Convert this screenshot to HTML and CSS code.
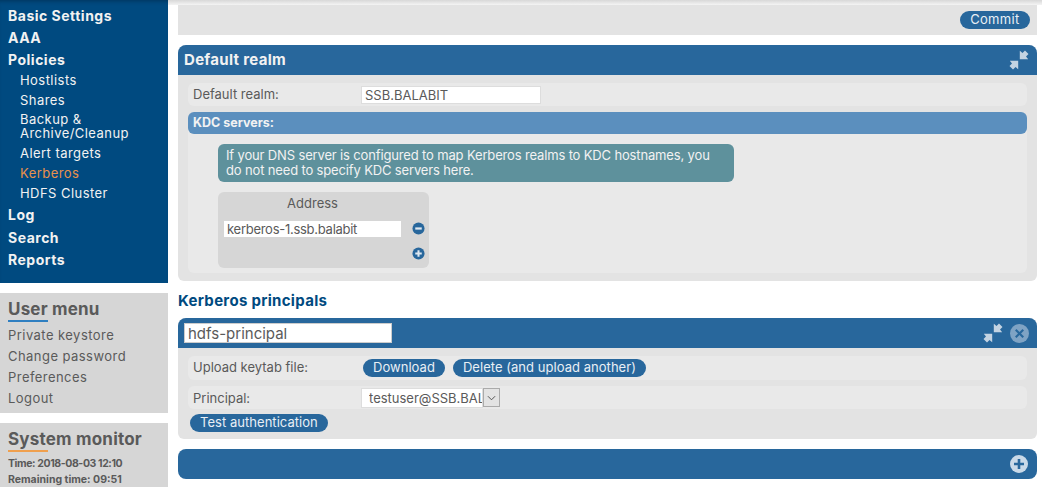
FILE: index.html
```html
<!DOCTYPE html>
<html lang="en">
<head>
<meta charset="utf-8">
<title>Kerberos</title>
<link rel="stylesheet" href="styles.css">
</head>
<body>
<div class="topshadow"></div>
<div class="page">
  <aside class="sidebar">
    <nav class="nav">
      <a class="l1">Basic Settings</a>
      <a class="l1">AAA</a>
      <a class="l1">Policies</a>
      <a class="l2">Hostlists</a>
      <a class="l2">Shares</a>
      <a class="l2 twoline">Backup &amp; Archive/Cleanup</a>
      <a class="l2">Alert targets</a>
      <a class="l2 active">Kerberos</a>
      <a class="l2">HDFS Cluster</a>
      <a class="l1">Log</a>
      <a class="l1 search">Search</a>
      <a class="l1">Reports</a>
    </nav>
    <section class="box usermenu">
      <h2 class="boxtitle blue">User menu</h2>
      <a>Private keystore</a>
      <a>Change password</a>
      <a>Preferences</a>
      <a>Logout</a>
    </section>
    <section class="box monitor">
      <h2 class="boxtitle orange">System monitor</h2>
      <p class="time">Time: 2018-08-03 12:10</p>
      <p>Remaining time: 09:51</p>
    </section>
  </aside>
  <main class="main">
    <div class="commitbar"><button class="btn commit">Commit</button></div>

    <section class="panel realm">
      <header class="phead">
        <span class="ptitle">Default realm</span>
        <svg class="ico shrink" viewBox="0 0 20 20"><path d="M19.500 4 16 .5 13.500 3 10.800 .8V9.200H19.200L17 6.500Z" fill="#c3d3e2"/><path d="M.5 16 4 19.500 6.500 17 9.200 19.200V10.800H.8L3 13.500Z" fill="#c3d3e2"/></svg>
      </header>
      <div class="pbody">
        <div class="row realmrow">
          <label>Default realm:</label>
          <input class="txt" value="SSB.BALABIT">
        </div>
        <div class="kdc">
          <div class="kdcbar">KDC servers:</div>
          <div class="kdcbody">
            <div class="info">If your DNS server is configured to map Kerberos realms to KDC hostnames, you do not need to specify KDC servers here.</div>
            <div class="addr">
              <div class="addrhead">Address</div>
              <div class="addrrow">
                <input class="txt addrinput" value="kerberos-1.ssb.balabit">
                <svg class="ico mini up" viewBox="0 0 14 14"><circle cx="7" cy="7" r="6.500" fill="#28679c"/><rect x="3.500" y="5.800" width="7" height="2.400" fill="#dfe8f0"/></svg>
              </div>
              <div class="addradd">
                <svg class="ico mini" viewBox="0 0 14 14"><circle cx="7" cy="7" r="6.500" fill="#28679c"/><path d="M3.500 5.900H5.900V3.500H8.100V5.900H10.500V8.100H8.100V10.500H5.900V8.100H3.500Z" fill="#dfe8f0"/></svg>
              </div>
            </div>
          </div>
        </div>
      </div>
    </section>

    <h2 class="sectitle">Kerberos principals</h2>

    <section class="panel principal">
      <header class="phead">
        <input class="nameinput" value="hdfs-principal">
        <svg class="ico shrink" viewBox="0 0 20 20"><path d="M19.500 4 16 .5 13.500 3 10.800 .8V9.200H19.200L17 6.500Z" fill="#c3d3e2"/><path d="M.5 16 4 19.500 6.500 17 9.200 19.200V10.800H.8L3 13.500Z" fill="#c3d3e2"/></svg>
        <svg class="ico close" viewBox="0 0 19 19"><circle cx="9.500" cy="9.500" r="9.500" fill="#7fa3c4"/><path d="M6.500 5 9.500 8 12.500 5 14 6.500 11 9.500 14 12.500 12.500 14 9.500 11 6.500 14 5 12.500 8 9.500 5 6.500Z" fill="#28679c"/></svg>
      </header>
      <div class="pbody">
        <div class="row keyrow">
          <label>Upload keytab file:</label>
          <div class="btns">
            <button class="btn">Download</button>
            <button class="btn">Delete (and upload another)</button>
          </div>
        </div>
        <div class="row princrow">
          <label>Principal:</label>
          <div class="combo">
            <input class="txt comboinput" value="testuser@SSB.BALABIT">
            <span class="arrow"><svg viewBox="0 0 10 6" class="chev"><path d="M1 1 5 5 9 1" fill="none" stroke="#444" stroke-width="1"/></svg></span>
          </div>
        </div>
        <button class="btn testbtn">Test authentication</button>
      </div>
    </section>

    <section class="panel adder">
      <header class="phead">
        <svg class="ico plus" viewBox="0 0 18 18"><circle cx="9" cy="9" r="9" fill="#c9d9e8"/><path d="M4 7.700H7.700V4H10.300V7.700H14V10.300H10.300V14H7.700V10.300H4Z" fill="#28679c"/></svg>
      </header>
    </section>
  </main>
</div>
</body>
</html>
```
FILE: styles.css
```css
* { box-sizing: border-box; }
html, body { margin: 0; height: 487px; overflow: hidden; background: #fff; }
body { font-family: Inter, "Open Sans", sans-serif; color: #5a5a5a; font-size: 13px; position: relative; }
.topshadow { position: absolute; left: 168px; right: 0; top: 0; height: 5px; background: linear-gradient(#d8d8d8, #f4f4f4); }
.page { display: flex; align-items: flex-start; }

.sidebar { width: 168px; flex: none; }
.nav { background: #004a80; height: 283px; padding: 5px 0 0 8px; display: flex; flex-direction: column; color: #f2f2f2; box-shadow: inset 0 4px 4px -3px #00345a; }
.l1 { font-weight: 700; font-size: 14px; line-height: 22px; letter-spacing: .5px; }
.l2 { font-size: 13px; line-height: 13.500px; padding: 3.250px 20px 3.250px 12px; letter-spacing: .45px; }
.twoline { margin-top: -1px; }
.active { color: #e8914b; }
.search { margin-top: 1px; }
.box { background: #d6d6d6; margin-top: 10px; padding: 6px 8px 0; }
.usermenu { height: 120px; display: flex; flex-direction: column; }
.usermenu a { font-size: 13px; line-height: 21px; letter-spacing: .45px; }
.monitor { height: 64px; }
.boxtitle { margin: 0 0 3px; font-size: 17px; line-height: 20px; font-weight: 700; position: relative; padding-bottom: 3px; letter-spacing: .2px; }
.boxtitle::after { content: ""; position: absolute; left: 0; bottom: 0; width: 40px; height: 2px; }
.blue::after { background: #2f7fc1; }
.orange::after { background: #f0a04e; }
.monitor .boxtitle { margin-bottom: 4px; }
.monitor p { margin: 0; font-size: 10.500px; font-weight: 700; line-height: 16px; }
.monitor .time { letter-spacing: -.4px; }

.main { width: 859px; margin-left: 10px; padding-top: 5px; display: flex; flex-direction: column; }
.commitbar { height: 30px; background: #e3e3e3; display: flex; justify-content: flex-end; align-items: flex-start; padding: 6px 7px 0 0; }
.btn { border: 0; border-radius: 9px; height: 18px; padding: 0 10px 1px; background: #28679c; color: #e8eff5; font: 13px/17px Inter, sans-serif; letter-spacing: .04px; white-space: nowrap; }
.commit { letter-spacing: .3px; padding: 0 10.500px 1px; }

.panel { margin-top: 10px; border-radius: 8px 8px 6px 6px; background: #e3e3e3; overflow: hidden; }
.phead { height: 30px; background: #28679c; display: flex; align-items: center; padding: 0 8px 0 6px; }
.ptitle { font-weight: 700; font-size: 15px; letter-spacing: .3px; color: #f2f2f2; flex: 1; padding-bottom: 1px; }
.ico { display: block; flex: none; }
.shrink { width: 20px; height: 20px; }
.pbody { padding: 8px 10px 8px; }

.row { display: flex; align-items: center; background: #e9e9e9; border-radius: 6px; padding-left: 5px; }
.row label { width: 168px; flex: none; font-size: 13px; }
.txt { border: 1px solid #ddd; background: #fff; color: #5a5a5a; font: 13px Inter, sans-serif; padding: 0 3px; }
.realmrow { height: 23px; }
.realmrow .txt { width: 180px; height: 18px; margin-top: 1px; }
.realmrow label { margin-top: -2px; }

.kdc { margin-top: 6px; background: #e9e9e9; border-radius: 6px; }
.kdcbar { height: 22px; line-height: 21px; background: #5b8fbe; border-radius: 6px; color: #f2f2f2; font-size: 12.500px; font-weight: 700; padding-left: 5px; }
.kdcbody { padding: 10px 0 5px 30px; }
.info { width: 516px; height: 38px; background: #5e919c; border-radius: 6px; color: #f2f2f2; font-size: 13px; line-height: 15px; letter-spacing: -.15px; padding: 4px 8px; }
.addr { width: 211px; height: 76px; margin-top: 10px; background: #d6d6d6; border-radius: 6px; padding: 3px 6px 0; }
.addrhead { width: 177px; text-align: center; font-size: 13px; line-height: 17px; }
.addrrow { display: flex; align-items: center; margin-top: 9px; gap: 11px; }
.addrinput { width: 177px; height: 16px; border: 0; padding-bottom: 1px; letter-spacing: -.27px; }
.mini { width: 13px; height: 13px; }
.up { margin-top: -1px; }
.addradd { display: flex; justify-content: flex-end; padding-top: 10px; margin-right: -2px; }

.sectitle { margin: 11px 0 0; font-size: 15px; line-height: 17px; font-weight: 700; letter-spacing: .3px; color: #004a80; }
.principal { margin-top: 9px; }
.nameinput { width: 208px; height: 20px; border: 1px solid #ccc; background: #fff; color: #5a5a5a; font: 15px Inter, sans-serif; padding: 0 3px; }
.principal .phead { justify-content: flex-start; }
.principal .shrink { margin-left: auto; }
.close { width: 19px; height: 19px; margin-left: 7px; }
.keyrow { height: 24px; }
.keyrow label { margin-top: -3px; }
.btns { display: flex; gap: 8px; padding-left: 2px; }
.princrow { height: 23px; margin-top: 6px; }
.combo { display: flex; align-items: center; }
.comboinput { width: 122px; height: 20px; padding: 0 0 0 7px; }
.arrow { width: 17px; height: 19px; background: #e3e3e3; border: 1px solid #aaa; display: flex; align-items: center; justify-content: center; }
.chev { width: 9px; height: 6px; }
.testbtn { display: block; margin: 5px 0 0 2px; }
.pbody:has(.testbtn) { padding-bottom: 7px; }

.adder { border-radius: 8px; }
.adder .phead { justify-content: flex-end; padding-right: 9px; }
.plus { width: 18px; height: 18px; }
```
